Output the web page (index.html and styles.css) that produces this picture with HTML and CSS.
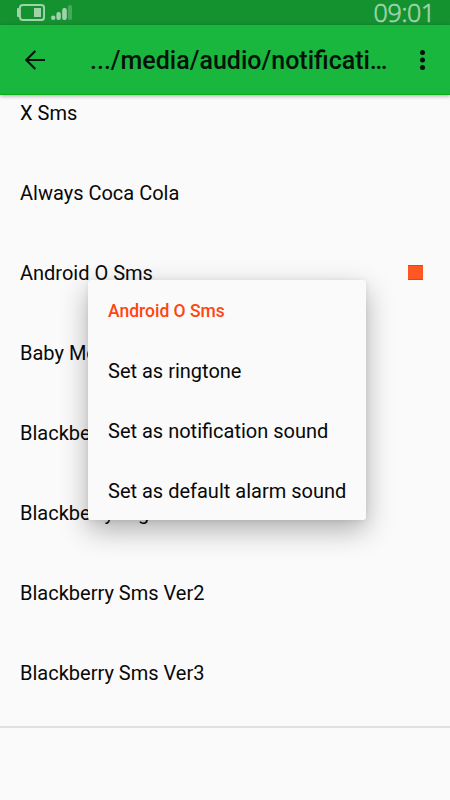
FILE: index.html
```html
<!DOCTYPE html>
<html lang="en">
<head>
<meta charset="utf-8">
<title>Notifications</title>
<link rel="stylesheet" href="styles.css">
</head>
<body>
<div class="screen">
  <div class="status">
    <svg class="battery" width="28" height="17" viewBox="0 0 28 17"><rect x="2.9" y="1" width="24.2" height="15" rx="3" fill="none" stroke="#a0d3ac" stroke-width="2"/><rect x="0" y="4" width="3" height="9" rx="1" fill="#a0d3ac"/><rect x="17" y="4" width="7" height="9" fill="#a0d3ac"/></svg>
    <svg class="signal" width="22" height="15" viewBox="0 0 22 15"><g fill="#a0d3ac"><circle cx="2.2" cy="12.8" r="2.2"/><rect x="5.4" y="7" width="4.4" height="8" rx="2"/><rect x="11.2" y="3" width="4.6" height="12" rx="2"/><rect x="17" y="0" width="4" height="15" rx="1.8" opacity=".35"/></g></svg>
    <span class="clock">09:01</span>
  </div>
  <header class="bar">
    <svg class="back" width="20" height="20" viewBox="0 0 20 20"><path d="M20 10H2M10.3 1L1.3 10L10.3 19" fill="none" stroke="#041307" stroke-width="2.1"/></svg>
    <h1 class="title">.../media/audio/notificati…</h1>
    <svg class="more" width="6" height="20" viewBox="0 0 6 20"><g fill="#041307"><circle cx="3.5" cy="2.5" r="2.5"/><circle cx="3.5" cy="10" r="2.5"/><circle cx="3.5" cy="17.5" r="2.5"/></g></svg>
  </header>
  <main class="list">
    <div class="row">X Sms</div>
    <div class="row">Always Coca Cola</div>
    <div class="row">Android O Sms<span class="mark"></span></div>
    <div class="row">Baby Mom</div>
    <div class="row">Blackberry</div>
    <div class="row">Blackberry Night Ver3</div>
    <div class="row">Blackberry Sms Ver2</div>
    <div class="row">Blackberry Sms Ver3</div>
  </main>
  <div class="menu">
    <div class="head">Android O Sms</div>
    <div class="item">Set as ringtone</div>
    <div class="item">Set as notification sound</div>
    <div class="item">Set as default alarm sound</div>
  </div>
</div>
</body>
</html>
```

FILE: styles.css
```css
body { margin: 0; font-family: Roboto, "Liberation Sans", sans-serif; color: #080808; }
.screen { position: relative; width: 450px; height: 800px; overflow: hidden; background: #fafafa; display: flex; flex-direction: column; }
.status { height: 25px; flex: none; background: #14922f; display: flex; box-sizing: border-box; padding-left: 17px; padding-right: 15px; }
.battery { margin-top: 4px; }
.signal { margin: 5px 0 0 6px; }
.clock { margin-left: auto; font: 300 25px/24px "Open Sans", sans-serif; letter-spacing: -0.3px; color: #a0d3ac; -webkit-text-stroke: 0.7px #a0d3ac; }
.bar { position: relative; z-index: 1; height: 70px; flex: none; box-sizing: border-box; background: #1ab73e; border-bottom: 1px solid #08ad18; box-shadow: 0 1px 4px rgba(0,0,0,.35); display: flex; align-items: center; padding: 0 25px; }
.title { margin: 2px 0 0 45px; flex: 1; font-size: 25px; line-height: 30px; font-weight: 500; color: #041307; white-space: nowrap; }
.more { overflow: visible; }
.list { height: 631px; flex: none; box-sizing: content-box; border-bottom: 2px solid #e0e0e0; display: flex; flex-direction: column; }
.row { height: 80px; flex: none; display: flex; align-items: center; padding: 0 27px 0 20px; font-size: 20px; }
.row:first-child { margin-top: -22px; }
.mark { margin: -1px 0 0 auto; width: 15px; height: 15px; box-sizing: border-box; background: #ff5722; border: solid #f93a12; border-width: 1px 0; }
.menu { position: absolute; z-index: 2; left: 88px; top: 280px; width: 278px; height: 240px; border-radius: 3px; background: #fafafa; box-shadow: 0 10px 28px rgba(0,0,0,.3), 0 1px 6px rgba(0,0,0,.08); }
.head, .item { height: 60px; line-height: 62px; padding-left: 20px; white-space: nowrap; }
.head { font-size: 17.5px; font-weight: 500; color: #ff4511; }
.item { font-size: 20px; }
```
